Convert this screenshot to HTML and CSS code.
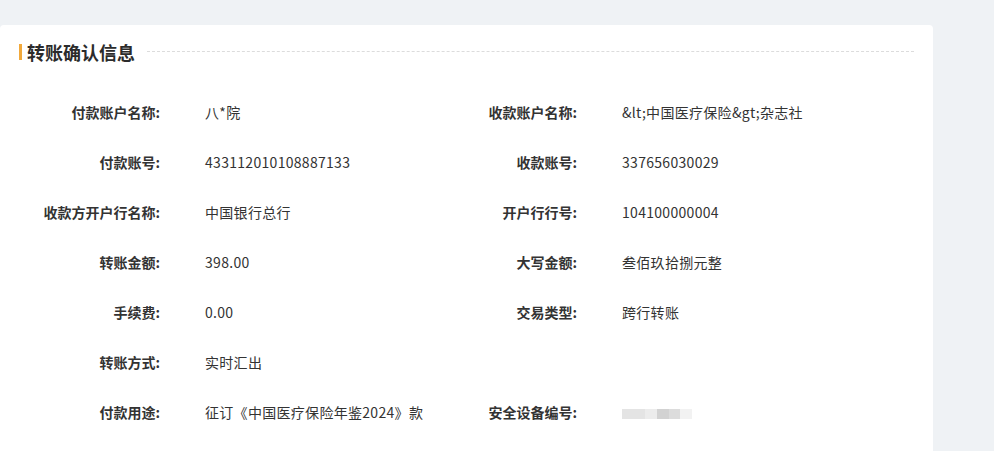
FILE: index.html
```html
<!DOCTYPE html>
<html lang="zh-CN">
<head>
    <meta charset="UTF-8">
    <meta name="viewport" content="width=device-width, initial-scale=1.0">
    <title>转账确认信息</title>
    <link rel="stylesheet" href="styles.css">
</head>
<body>
    <div class="page">
        <div class="card">
            <!-- Header -->
            <div class="card-header">
                <span class="bar"></span>
                <h2>转账确认信息</h2>
                <span class="dash"></span>
            </div>

            <!-- Info grid -->
            <div class="info">
                <div class="item"><span class="label">付款账户名称:</span><span class="value">八*院</span></div>
                <div class="item"><span class="label">收款账户名称:</span><span class="value">&amp;lt;中国医疗保险&amp;gt;杂志社</span></div>

                <div class="item"><span class="label">付款账号:</span><span class="value">433112010108887133</span></div>
                <div class="item"><span class="label">收款账号:</span><span class="value">337656030029</span></div>

                <div class="item"><span class="label">收款方开户行名称:</span><span class="value">中国银行总行</span></div>
                <div class="item"><span class="label">开户行行号:</span><span class="value">104100000004</span></div>

                <div class="item"><span class="label">转账金额:</span><span class="value">398.00</span></div>
                <div class="item"><span class="label">大写金额:</span><span class="value">叁佰玖拾捌元整</span></div>

                <div class="item"><span class="label">手续费:</span><span class="value">0.00</span></div>
                <div class="item"><span class="label">交易类型:</span><span class="value">跨行转账</span></div>

                <div class="item"><span class="label">转账方式:</span><span class="value">实时汇出</span></div>
                <div class="item"></div>

                <div class="item"><span class="label">付款用途:</span><span class="value">征订《中国医疗保险年鉴2024》款</span></div>
                <div class="item"><span class="label">安全设备编号:</span><span class="value"><span class="masked"></span></span></div>
            </div>
        </div>
    </div>
</body>
</html>
```

FILE: styles.css
```css
body {
    margin: 0;
    padding: 0;
    background-color: #eff2f5;
    font-family: "Noto Sans CJK SC", "Noto Sans", sans-serif;
    color: #333;
}

.page {
    padding-top: 25px;
    height: 426px;
    overflow: hidden;
}

.card {
    width: 933px;
    height: 460px;
    background-color: #fff;
    border-radius: 4px;
}

.card-header {
    display: flex;
    align-items: center;
    padding: 19px 19px 0 19px;
    height: 16px;
}

.card-header .bar {
    width: 3px;
    height: 16px;
    background-color: #f2a93b;
    margin-right: 5px;
}

.card-header h2 {
    margin: 0;
    font-size: 18px;
    line-height: 16px;
    font-weight: bold;
    color: #2b2b2b;
}

.card-header .dash {
    flex: 1;
    margin-left: 12px;
    border-top: 1px dashed #dcdcdc;
    margin-top: -1px;
}

.info {
    display: grid;
    grid-template-columns: 417px 417px;
    padding: 27px 0 0 20px;
}

.item {
    display: flex;
    height: 50px;
    line-height: 50px;
    font-size: 14px;
}

.item .label {
    width: 140px;
    text-align: right;
    font-weight: bold;
    color: #333;
}

.item .value {
    margin-left: 45px;
    color: #333;
    letter-spacing: 0.3px;
}

.masked {
    display: inline-block;
    width: 70px;
    height: 10px;
    vertical-align: middle;
    background: linear-gradient(to right,
        #e4e4e4 0, #e4e4e4 23px,
        #ececec 23px, #ececec 35px,
        #d2d2d2 35px, #d2d2d2 47px,
        #dcdcdc 47px, #dcdcdc 58px,
        #f2f2f2 58px, #f2f2f2 70px);
}
```
